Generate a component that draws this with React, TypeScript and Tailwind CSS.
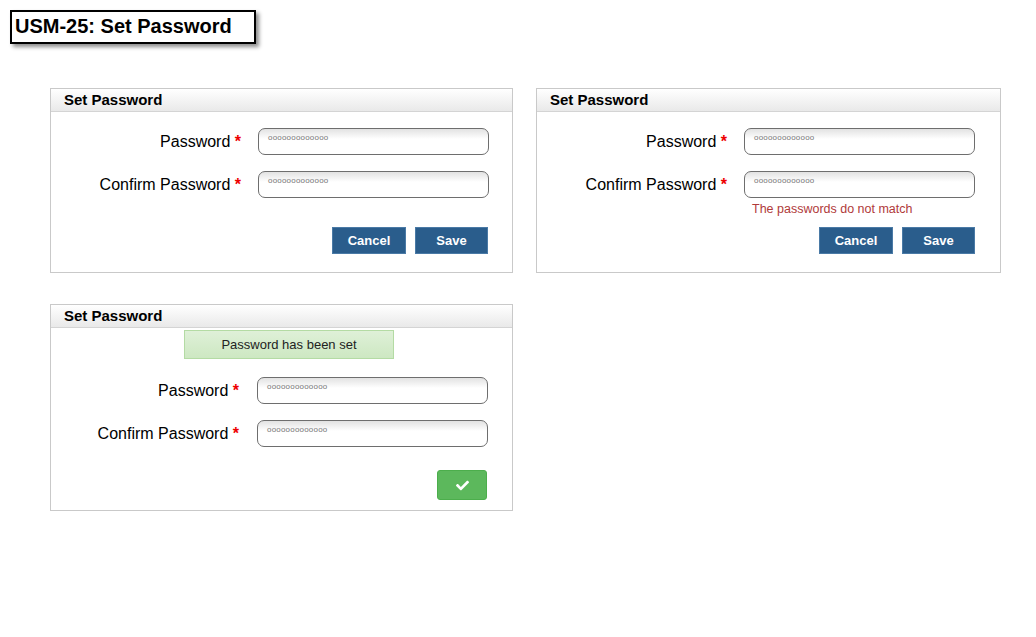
import { FaCheck } from "react-icons/fa";

const FONT = "font-['Liberation_Sans',Arial,sans-serif]";

function PanelHeader() {
  return (
    <div className="h-[23px] border-b border-[#d4d4d4] bg-gradient-to-b from-white to-[#e9e9e9] pl-[13px] text-[15px] font-bold leading-[22px] text-black">
      Set Password
    </div>
  );
}

function PasswordInput() {
  return (
    <div className="h-[27px] w-[231px] rounded-[7px] border-[1.5px] border-[#6e6e6e] bg-gradient-to-b from-[#e2e2e2] via-white via-40% to-white pl-[9px] pt-[3px] text-[8px] leading-[12px] tracking-[0.2px] text-[#777]">
      ooooooooooooo
    </div>
  );
}

function FieldRow({ label, shifted = false }: { label: string; shifted?: boolean }) {
  return (
    <div className="flex items-center">
      <div className={`text-right text-[16px] text-black ${shifted ? "w-[188px]" : "w-[190px]"}`}>
        {label} <span className="font-bold text-[#e00]">*</span>
      </div>
      <div className={shifted ? "ml-[18px]" : "ml-[17px]"}>
        <PasswordInput />
      </div>
    </div>
  );
}

function ActionButtons() {
  return (
    <div className="flex justify-end gap-[9px] pr-[24px]">
      <button className="h-[27px] w-[74px] border border-[#4a7aa6] bg-[#2a5d8c] text-[13px] font-bold text-white">
        Cancel
      </button>
      <button className="h-[27px] w-[73px] border border-[#4a7aa6] bg-[#2a5d8c] text-[13px] font-bold text-white">
        Save
      </button>
    </div>
  );
}

function SetPasswordPanel({ error, wide = false }: { error?: string; wide?: boolean }) {
  return (
    <div className={`border border-[#c9c9c9] bg-white ${wide ? "w-[465px]" : "w-[463px]"}`}>
      <PanelHeader />
      <div className="flex flex-col pt-[16px] pb-[18px]">
        <FieldRow label="Password" />
        <div className="mt-[16px]">
          <FieldRow label="Confirm Password" />
        </div>
        <div className={`h-[29px] ${wide ? "pl-[215px]" : "pl-[214px]"}`}>
          {error && (
            <div className="pt-[4px] text-[12.5px] leading-[14px] text-[#b03a3a]">{error}</div>
          )}
        </div>
        <div className={wide ? "pr-[1px]" : ""}>
          <ActionButtons />
        </div>
      </div>
    </div>
  );
}

function SuccessPanel() {
  return (
    <div className="w-[463px] border border-[#c9c9c9] bg-white">
      <PanelHeader />
      <div className="flex flex-col pt-[2px] pb-[10px]">
        <div className="ml-[133px] flex h-[29px] w-[210px] items-center justify-center border border-[#b4dba4] bg-gradient-to-b from-[#dff0d8] to-[#cde8c2] text-[13px] text-[#222]">
          Password has been set
        </div>
        <div className="mt-[18px]">
          <FieldRow label="Password" shifted />
        </div>
        <div className="mt-[16px]">
          <FieldRow label="Confirm Password" shifted />
        </div>
        <div className="mt-[23px] flex justify-end pr-[25px]">
          <button className="flex h-[30px] w-[50px] items-center justify-center rounded-[3px] border border-[#4cae4c] bg-[#5cb85c] text-white">
            <FaCheck className="h-[13px] w-[13px]" />
          </button>
        </div>
      </div>
    </div>
  );
}

export default function App() {
  return (
    <div className={`min-h-[637px] w-[1036px] bg-white ${FONT}`}>
      <div className="pl-[10px] pt-[10px]">
        <div className="h-[34px] w-[246px] border-2 border-black pl-[3px] text-[20px] font-bold leading-[29px] text-black shadow-[3px_3px_4px_rgba(0,0,0,0.45)]">
          USM-25: Set Password
        </div>
      </div>
      <div className="grid grid-cols-[463px_465px] gap-x-[23px] gap-y-[31px] pl-[50px] pt-[44px]">
        <SetPasswordPanel />
        <SetPasswordPanel wide error="The passwords do not match" />
        <SuccessPanel />
      </div>
    </div>
  );
}
